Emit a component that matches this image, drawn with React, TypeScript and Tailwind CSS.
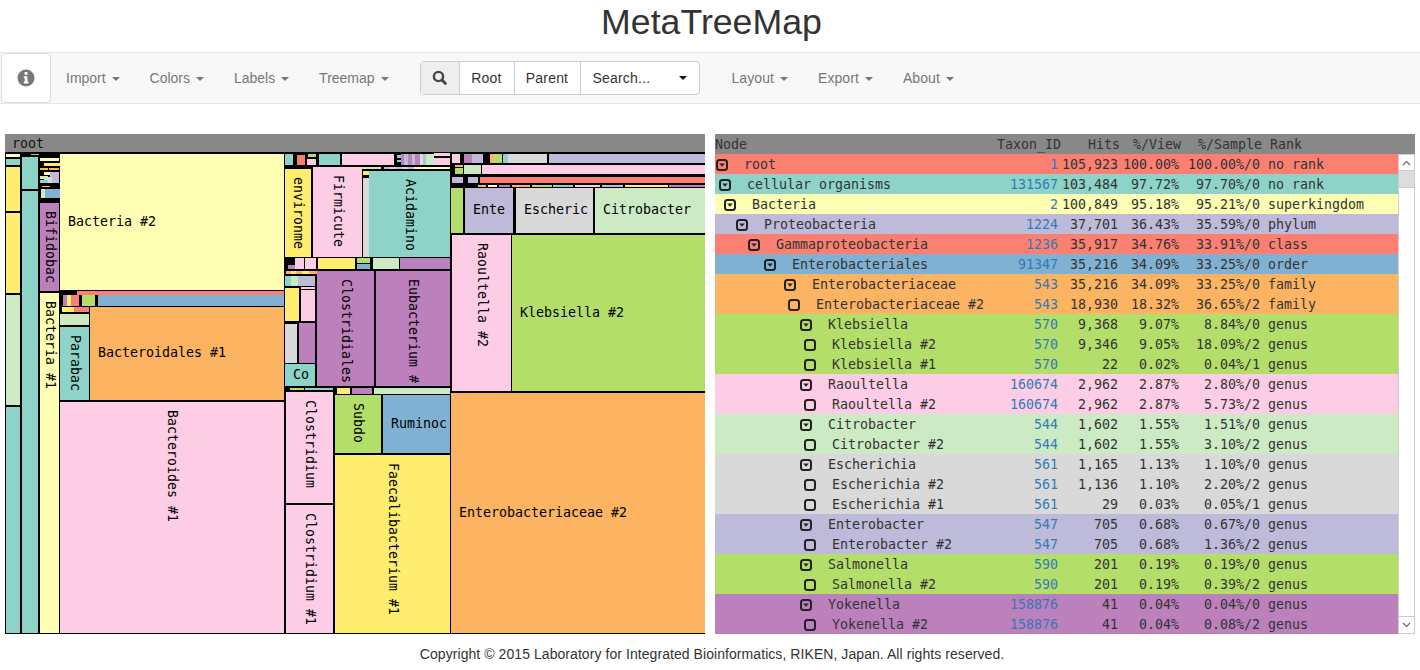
const colors = {
  teal: 'bg-[#8dd3c7]',
  pale: 'bg-[#ffffb3]',
  lav: 'bg-[#bebada]',
  red: 'bg-[#fb8072]',
  blue: 'bg-[#80b1d3]',
  orange: 'bg-[#fdb462]',
  green: 'bg-[#b3de69]',
  pink: 'bg-[#fccde5]',
  gray: 'bg-[#d9d9d9]',
  purple: 'bg-[#bc80bd]',
  mint: 'bg-[#ccebc5]',
  yellow: 'bg-[#ffed6f]',
};
type Color = keyof typeof colors;
type Cell = [number, number, number, number, Color, string?, boolean?];

// x0, y0, x1, y1 in screenshot coordinates
const cells: Cell[] = [
  // left columns
  [6, 154, 9, 157, 'pale'], [10, 154, 20, 157, 'pale'], [6, 159, 20, 165, 'teal'],
  [6, 167, 20, 211, 'yellow'], [6, 213, 20, 293, 'yellow'], [6, 295, 20, 405, 'mint'], [6, 407, 20, 633, 'teal'],
  [22, 157, 38, 189, 'teal'], [22, 191, 38, 633, 'teal'], [31, 154, 33, 155, 'teal'],
  [40, 158, 59, 161, 'pale'], [44, 163, 50, 166, 'yellow'], [52, 163, 59, 166, 'yellow'],
  [40, 168, 48, 170, 'orange'], [49, 168, 59, 170, 'orange'], [44, 172, 48, 175, 'pale'],
  [50, 172, 59, 183, 'lav'], [44, 177, 48, 183, 'gray'], [40, 176, 43, 179, 'mint'], [40, 180, 43, 183, 'teal'],
  [42, 186, 49, 187, 'orange'], [41, 189, 43, 198, 'mint'], [45, 189, 50, 198, 'blue'], [52, 189, 59, 198, 'blue'],
  [40, 203, 59, 291, 'purple', 'Bifidobac', true],
  [40, 293, 59, 633, 'pale', 'Bacteria #1', true],
  [60, 154, 284, 290, 'pale', 'Bacteria #2'],
  // thin band above Bacteroidales
  [77, 291, 284, 295, 'red'], [63, 295, 66, 306, 'purple'], [67, 295, 70, 306, 'yellow'], [71, 295, 79, 306, 'red'],
  [82, 295, 95, 306, 'green'], [98, 295, 284, 306, 'blue'], [71, 307, 89, 312, 'red'], [62, 307, 64, 312, 'yellow'], [66, 307, 69, 312, 'yellow'],
  [60, 314, 89, 325, 'mint'], [60, 327, 89, 400, 'teal', 'Parabac', true],
  [90, 307, 284, 400, 'orange', 'Bacteroidales #1'],
  [60, 402, 284, 633, 'pink', 'Bacteroides #1', true],
  // top band, middle
  [285, 154, 288, 165, 'teal'], [297, 155, 305, 165, 'red'], [308, 154, 316, 157, 'green'], [307, 159, 316, 165, 'pink'], [319, 154, 340, 165, 'teal'],
  [342, 154, 394, 165, 'pink'], [397, 155, 398, 158, 'teal'], [397, 160, 398, 162, 'teal'], [401, 154, 403, 165, 'purple'], [404, 154, 406, 165, 'lav'], [408, 154, 409, 165, 'purple'],
  [412, 154, 413, 165, 'lav'], [415, 154, 416, 165, 'purple'], [420, 154, 421, 165, 'mint'], [423, 154, 424, 165, 'lav'], [426, 154, 432, 165, 'mint'],
  [434, 153, 450, 156, 'pink'], [434, 158, 450, 165, 'pink'],
  [362, 167, 381, 169, 'mint'], [420, 167, 450, 169, 'pale'], [384, 167, 386, 169, 'lav'], [390, 167, 392, 169, 'gray'], [396, 167, 399, 169, 'lav'],
  [402, 167, 405, 169, 'gray'], [408, 167, 411, 169, 'lav'], [414, 167, 417, 169, 'pale'],
  [285, 169, 311, 257, 'yellow', 'environme', true],
  [313, 167, 362, 257, 'pink', 'Firmicute', true],
  [363, 171, 367, 175, 'yellow'], [363, 178, 367, 257, 'gray'],
  [369, 171, 450, 257, 'teal', 'Acidamino', true],
  // row under Firmicutes
  [288, 265, 294, 269, 'purple'], [295, 258, 304, 269, 'pink'], [305, 258, 316, 269, 'pink'], [318, 258, 355, 269, 'yellow'],
  [357, 258, 370, 263, 'green'], [357, 264, 370, 269, 'blue'], [373, 258, 399, 269, 'mint'], [400, 258, 450, 269, 'purple'],
  [286, 271, 288, 274, 'orange'], [291, 271, 293, 274, 'yellow'], [296, 271, 298, 274, 'orange'], [302, 271, 304, 274, 'yellow'], [309, 271, 311, 274, 'orange'],
  [285, 276, 289, 286, 'teal'], [291, 276, 297, 286, 'mint'], [298, 276, 315, 286, 'lav'],
  [285, 288, 299, 321, 'yellow'], [301, 287, 315, 289, 'pink'], [301, 290, 315, 321, 'pink'],
  [285, 324, 297, 363, 'gray'], [299, 323, 315, 363, 'purple'], [285, 364, 315, 386, 'teal', 'Co'],
  [317, 271, 374, 386, 'purple', 'Clostridiales', true],
  [376, 271, 450, 386, 'purple', 'Eubacterium #', true],
  [290, 388, 293, 390, 'green'], [296, 388, 302, 390, 'green'], [305, 388, 333, 390, 'teal'],
  [337, 388, 350, 394, 'yellow'], [352, 388, 372, 394, 'purple'], [374, 388, 450, 394, 'mint'],
  [286, 392, 333, 503, 'pink', 'Clostridium', true],
  [286, 505, 333, 633, 'pink', 'Clostridium #1', true],
  [335, 395, 381, 453, 'green', 'Subdo', true],
  [383, 395, 450, 453, 'blue', 'Ruminoc'],
  [335, 455, 450, 633, 'yellow', 'Faecalibacterium #1', true],
  // right block
  [467, 154, 483, 163, 'lav'], [452, 154, 455, 163, 'pink'], [464, 154, 466, 163, 'purple'], [490, 154, 492, 163, 'orange'], [494, 154, 501, 163, 'green'],
  [503, 154, 507, 163, 'teal'], [508, 154, 547, 163, 'gray'], [549, 154, 705, 163, 'lav'],
  [455, 165, 462, 167, 'orange'], [455, 168, 462, 174, 'green'], [464, 165, 481, 174, 'mint'], [482, 165, 705, 174, 'pink'],
  [452, 177, 463, 183, 'lav'], [468, 177, 478, 183, 'lav'], [480, 177, 705, 183, 'red'],
  [478, 185, 486, 187, 'orange'], [488, 185, 497, 187, 'pale'], [499, 185, 510, 187, 'purple'],
  [512, 185, 530, 187, 'orange'], [532, 185, 552, 187, 'green'], [553, 185, 573, 187, 'teal'], [575, 185, 600, 187, 'pink'],
  [602, 185, 623, 187, 'lav'], [625, 185, 668, 187, 'yellow'], [669, 185, 705, 187, 'purple'],
  [451, 188, 463, 233, 'green'],
  [465, 188, 513, 233, 'lav', 'Ente'],
  [516, 188, 593, 233, 'gray', 'Escheric'],
  [595, 188, 705, 233, 'mint', 'Citrobacter'],
  [452, 235, 511, 391, 'pink', 'Raoultella #2', true],
  [512, 235, 705, 391, 'green', 'Klebsiella #2'],
  [451, 393, 705, 633, 'orange', 'Enterobacteriaceae #2'],
];

type Row = [string, number, boolean, Color, string, string, string, string, string];

// name, icon offset from the table edge, leaf, colour, taxon, hits, view, sample, rank
const rows: Row[] = [
  ['root', 1, false, 'red', '1', '105,923', '100.00%', '100.00%/0', 'no rank'],
  ['cellular organisms', 4, false, 'teal', '131567', '103,484', '97.72%', '97.70%/0', 'no rank'],
  ['Bacteria', 9, false, 'pale', '2', '100,849', '95.18%', '95.21%/0', 'superkingdom'],
  ['Proteobacteria', 21, false, 'lav', '1224', '37,701', '36.43%', '35.59%/0', 'phylum'],
  ['Gammaproteobacteria', 33, false, 'red', '1236', '35,917', '34.76%', '33.91%/0', 'class'],
  ['Enterobacteriales', 49, false, 'blue', '91347', '35,216', '34.09%', '33.25%/0', 'order'],
  ['Enterobacteriaceae', 69, false, 'orange', '543', '35,216', '34.09%', '33.25%/0', 'family'],
  ['Enterobacteriaceae #2', 73, true, 'orange', '543', '18,930', '18.32%', '36.65%/2', 'family'],
  ['Klebsiella', 85, false, 'green', '570', '9,368', '9.07%', '8.84%/0', 'genus'],
  ['Klebsiella #2', 89, true, 'green', '570', '9,346', '9.05%', '18.09%/2', 'genus'],
  ['Klebsiella #1', 89, true, 'green', '570', '22', '0.02%', '0.04%/1', 'genus'],
  ['Raoultella', 85, false, 'pink', '160674', '2,962', '2.87%', '2.80%/0', 'genus'],
  ['Raoultella #2', 89, true, 'pink', '160674', '2,962', '2.87%', '5.73%/2', 'genus'],
  ['Citrobacter', 85, false, 'mint', '544', '1,602', '1.55%', '1.51%/0', 'genus'],
  ['Citrobacter #2', 89, true, 'mint', '544', '1,602', '1.55%', '3.10%/2', 'genus'],
  ['Escherichia', 85, false, 'gray', '561', '1,165', '1.13%', '1.10%/0', 'genus'],
  ['Escherichia #2', 89, true, 'gray', '561', '1,136', '1.10%', '2.20%/2', 'genus'],
  ['Escherichia #1', 89, true, 'gray', '561', '29', '0.03%', '0.05%/1', 'genus'],
  ['Enterobacter', 85, false, 'lav', '547', '705', '0.68%', '0.67%/0', 'genus'],
  ['Enterobacter #2', 89, true, 'lav', '547', '705', '0.68%', '1.36%/2', 'genus'],
  ['Salmonella', 85, false, 'green', '590', '201', '0.19%', '0.19%/0', 'genus'],
  ['Salmonella #2', 89, true, 'green', '590', '201', '0.19%', '0.39%/2', 'genus'],
  ['Yokenella', 85, false, 'purple', '158876', '41', '0.04%', '0.04%/0', 'genus'],
  ['Yokenella #2', 89, true, 'purple', '158876', '41', '0.04%', '0.08%/2', 'genus'],
];

const Caret = () => (
  <span className="ml-[2px] inline-block h-0 w-0 border-x-4 border-t-4 border-x-transparent border-t-current align-middle" />
);

const NavItem = ({ label }: { label: string }) => (
  <a className="cursor-pointer whitespace-nowrap px-[15px] text-[#777]">
    {label} <Caret />
  </a>
);

const NodeIcon = ({ leaf }: { leaf: boolean }) => (
  <svg width="13" height="13" viewBox="0 0 13 13" className="shrink-0">
    <rect x="1" y="1" width="10" height="10" rx="2.5" fill="none" stroke="#222" strokeWidth="2" />
    {!leaf && <path d="M3.2 4.5 L8.8 4.5 L6 7.8 Z" fill="#222" />}
  </svg>
);

const Treemap = () => (
  <div className="w-[700px] shrink-0">
    <div className="h-[18px] bg-[#888] pl-[7px] text-[13.3px] leading-5 text-[#111]">root</div>
    <div className="relative h-[482px] overflow-hidden bg-black">
      {cells.map(([x0, y0, x1, y1, color, label, vertical], i) => (
        <div
          key={i}
          className={`absolute flex overflow-hidden whitespace-nowrap text-[13.3px] text-black ${colors[color]} ${
            vertical ? 'justify-center pt-2' : 'items-center pl-2'
          }`}
          style={{ left: x0 - 5, top: y0 - 152, width: x1 - x0, height: y1 - y0 }}
        >
          {label && <span className={vertical ? '[writing-mode:vertical-rl]' : ''}>{label}</span>}
        </div>
      ))}
    </div>
  </div>
);

const Table = () => (
  <div className="w-[700px] shrink-0 text-[13.3px] text-[#333]">
    <div className="grid h-5 grid-cols-[266px_80px_59px_61px_81px_1fr] whitespace-pre bg-[#888] leading-[22px]">
      <span>Node</span>
      <span className="text-right">Taxon_ID</span>
      <span className="text-right">Hits</span>
      <span className="text-right">%/View</span>
      <span className="text-right">%/Sample</span>
      <span className="pl-2">Rank</span>
    </div>
    <div className="flex h-[480px]">
      <div className="w-[683px] shrink-0">
        {rows.map(([name, indent, leaf, color, taxon, hits, view, sample, rank]) => (
          <div
            key={name}
            className={`grid h-5 grid-cols-[263px_80px_60px_61px_81px_1fr] items-center whitespace-pre pt-[2px] leading-[18px] ${colors[color]}`}
          >
            <div className="flex items-center gap-[15px]" style={{ paddingLeft: indent }}>
              <NodeIcon leaf={leaf} />
              <span>{name}</span>
            </div>
            <a className="text-right text-[#337ab7]">{taxon}</a>
            <span className="text-right">{hits}</span>
            <span className="text-right">{view}</span>
            <span className="text-right">{sample}</span>
            <span className="pl-2">{rank}</span>
          </div>
        ))}
      </div>
      <div className="flex w-[17px] flex-col justify-between border-x border-b border-[#ccc] bg-white">
        <div>
          <div className="flex h-[17px] items-center justify-center border-y border-[#ccc]">
            <svg width="9" height="6" viewBox="0 0 9 6">
              <path d="M1 5 L4.5 1.5 L8 5" fill="none" stroke="#666" strokeWidth="1.2" />
            </svg>
          </div>
          <div className="h-[17px] border-b border-[#ccc] bg-[#ddd]" />
        </div>
        <div className="flex h-[17px] items-center justify-center border-t border-[#ccc]">
          <svg width="9" height="6" viewBox="0 0 9 6">
            <path d="M1 1 L4.5 4.5 L8 1" fill="none" stroke="#666" strokeWidth="1.2" />
          </svg>
        </div>
      </div>
    </div>
  </div>
);

export default function App() {
  return (
    <div className="h-[670px] w-[1420px] overflow-hidden bg-white font-['Liberation_Sans',sans-serif] text-sm text-[#333]">
      <h1 className="h-[52px] pl-[3px] text-center text-[35.7px] leading-[44px]">MetaTreeMap</h1>

      <nav className="flex h-[52px] items-center border-y border-[#e7e7e7] bg-[#f8f8f8]">
        <button className="ml-px flex h-[50px] w-[50px] shrink-0 items-center justify-center rounded border border-[#ddd] bg-white">
          <svg width="18" height="18" viewBox="0 0 18 18">
            <circle cx="9" cy="9" r="8.5" fill="#777" />
            <rect x="7.6" y="3" width="2.8" height="2.8" fill="#fff" />
            <path d="M6.8 7.2 H10.4 V12.4 H11.4 V14.4 H6.8 V12.4 H7.8 V9.2 H6.8 Z" fill="#fff" />
          </svg>
        </button>
        <NavItem label="Import" />
        <NavItem label="Colors" />
        <NavItem label="Labels" />
        <NavItem label="Treemap" />
        <div className="ml-4 flex h-[34px] w-[280px] shrink-0 rounded border border-[#ccc] bg-white tracking-[0.2px]">
          <span className="flex w-[39px] items-center justify-center border-r border-[#ccc] bg-[#eee]">
            <svg width="16" height="16" viewBox="0 0 16 16">
              <circle cx="6.5" cy="6.5" r="4.6" fill="none" stroke="#444" strokeWidth="2.4" />
              <path d="M10 10 L14.2 14.2" fill="none" stroke="#444" strokeWidth="2.8" />
            </svg>
          </span>
          <span className="flex w-[55px] items-center justify-center border-r border-[#ccc]">Root</span>
          <span className="flex w-[66px] items-center justify-center border-r border-[#ccc]">Parent</span>
          <span className="flex flex-1 items-center justify-between pl-3 pr-3">
            <span>Search...</span>
            <span className="h-0 w-0 border-x-4 border-t-4 border-x-transparent border-t-[#111]" />
          </span>
        </div>
        <div className="ml-[17px] flex tracking-[0.08px]">
          <NavItem label="Layout" />
          <NavItem label="Export" />
          <NavItem label="About" />
        </div>
      </nav>

      <main className="mt-[30px] flex gap-[10px] pl-[5px] font-['DejaVu_Sans_Mono',monospace]">
        <Treemap />
        <Table />
      </main>

      <footer className="mt-[11px] pl-[4px] text-center leading-[18px] tracking-[0.065px]">
        Copyright © 2015 Laboratory for Integrated Bioinformatics, RIKEN, Japan. All rights reserved.
      </footer>
    </div>
  );
}
